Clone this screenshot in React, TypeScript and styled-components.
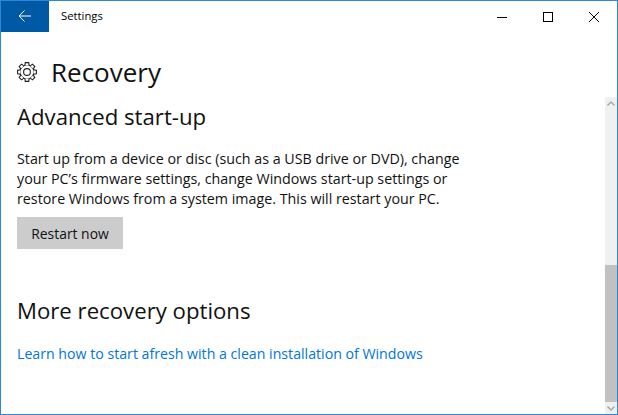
import React from 'react';
import styled, { createGlobalStyle } from 'styled-components';

const GlobalStyle = createGlobalStyle`
  html, body {
    margin: 0;
    padding: 0;
    background: #fff;
  }
  * {
    box-sizing: border-box;
  }
`;

const Window = styled.div`
  width: 618px;
  height: 415px;
  display: flex;
  flex-direction: column;
  border: 1px solid #2b88d8;
  background: #fff;
  color: #1a1a1a;
  font-family: 'Open Sans', 'Noto Sans', sans-serif;
  overflow: hidden;
`;

const TitleBar = styled.div`
  height: 31px;
  flex: none;
  display: flex;
  align-items: center;
`;

const BackButton = styled.div`
  width: 48px;
  height: 31px;
  padding: 0 1px 2px 0;
  background: #0059a5;
  display: flex;
  align-items: center;
  justify-content: center;
`;

const Title = styled.div`
  flex: 1;
  margin: 0 0 2px 12px;
  font-size: 11.3px;
  color: #000;
`;

const WindowControls = styled.div`
  display: flex;
  height: 31px;
`;

const ControlButton = styled.div`
  width: 46px;
  display: flex;
  align-items: center;
  justify-content: center;
`;

const PageHeader = styled.div`
  height: 65px;
  flex: none;
  padding: 20px 0 0 15px;
  display: flex;
  align-items: flex-start;
`;

const PageIcon = styled.div`
  width: 22px;
  height: 22px;
  margin: 9px 13px 0 0;
  display: flex;
`;

const PageTitle = styled.h1`
  margin: 0;
  font-size: 26px;
  line-height: 40px;
  font-weight: 400;
  color: #111;
`;

const Body = styled.div`
  flex: 1;
  min-height: 0;
  display: flex;
`;

const Content = styled.div`
  flex: 1;
  padding: 5px 0 0 16px;
`;

const SectionTitle = styled.h2<{ $gap: number }>`
  margin: 0 0 ${(p) => p.$gap}px;
  font-size: 22.2px;
  line-height: 30px;
  font-weight: 400;
  color: #111;
`;

const Description = styled.p`
  margin: 0 0 8px;
  width: 460px;
  font-size: 14.27px;
  line-height: 20px;
  color: #111;
`;

const Button = styled.div`
  width: 106px;
  height: 32px;
  margin-bottom: 47px;
  background: #cccccc;
  display: flex;
  align-items: center;
  justify-content: center;
  font-size: 13.9px;
  color: #111;
`;

const Link = styled.a`
  font-size: 14.17px;
  line-height: 20px;
  color: #0078d7;
  text-decoration: none;
`;

const Scrollbar = styled.div`
  width: 12px;
  flex: none;
  display: flex;
  flex-direction: column;
  background: #f0f0f0;
`;

const ScrollArrow = styled.div`
  height: 12px;
  flex: none;
  display: flex;
  align-items: center;
  justify-content: center;
`;

const ScrollTrack = styled.div`
  flex: 1;
  display: flex;
  flex-direction: column;
  justify-content: flex-end;
`;

const ScrollThumb = styled.div`
  height: 137px;
  background: #c1c1c1;
`;

const gearTeeth = [0, 45, 90, 135, 180, 225, 270, 315];

export default function App() {
  return (
    <>
      <GlobalStyle />
      <Window>
        <TitleBar>
          <BackButton>
            <svg width="13" height="12" viewBox="0 0 13 12" fill="none" stroke="#fff" strokeWidth="1">
              <path d="M1 6h12M6.5.5 1 6l5.5 5.5" />
            </svg>
          </BackButton>
          <Title>Settings</Title>
          <WindowControls>
            <ControlButton>
              <svg width="10" height="10" viewBox="0 0 10 10" stroke="#000" strokeWidth="1">
                <path d="M0 5.5h10" />
              </svg>
            </ControlButton>
            <ControlButton>
              <svg width="10" height="10" viewBox="0 0 10 10" fill="none" stroke="#000" strokeWidth="1">
                <rect x="0.5" y="0.5" width="9" height="9" />
              </svg>
            </ControlButton>
            <ControlButton>
              <svg width="10" height="10" viewBox="0 0 10 10" stroke="#000" strokeWidth="1">
                <path d="M0 0l10 10M10 0 0 10" />
              </svg>
            </ControlButton>
          </WindowControls>
        </TitleBar>
        <PageHeader>
          <PageIcon>
            <svg width="22" height="22" viewBox="0 0 22 22" fill="none" stroke="#222" strokeWidth="1.1">
              <circle cx="11" cy="11" r="3.4" />
              <circle cx="11" cy="11" r="7" />
              {gearTeeth.map((angle) => (
                <path
                  key={angle}
                  d="M8.9 4.4 9.3 1.6h3.4l.4 2.8"
                  fill="#fff"
                  transform={`rotate(${angle} 11 11)`}
                />
              ))}
            </svg>
          </PageIcon>
          <PageTitle>Recovery</PageTitle>
        </PageHeader>
        <Body>
          <Content>
            <SectionTitle $gap={17}>Advanced start-up</SectionTitle>
            <Description>
              Start up from a device or disc (such as a USB drive or DVD), change
              your PC’s firmware settings, change Windows start-up settings or
              restore Windows from a system image. This will restart your PC.
            </Description>
            <Button>Restart now</Button>
            <SectionTitle $gap={16}>More recovery options</SectionTitle>
            <Link>Learn how to start afresh with a clean installation of Windows</Link>
          </Content>
          <Scrollbar>
            <ScrollArrow>
              <svg width="8" height="5" viewBox="0 0 8 5" fill="none" stroke="#a6a6a6" strokeWidth="1.4">
                <path d="M.5 4.5 4 1l3.5 3.5" />
              </svg>
            </ScrollArrow>
            <ScrollTrack>
              <ScrollThumb />
            </ScrollTrack>
            <ScrollArrow>
              <svg width="8" height="5" viewBox="0 0 8 5" fill="none" stroke="#a6a6a6" strokeWidth="1.4">
                <path d="M.5.5 4 4 7.5.5" />
              </svg>
            </ScrollArrow>
          </Scrollbar>
        </Body>
      </Window>
    </>
  );
}
